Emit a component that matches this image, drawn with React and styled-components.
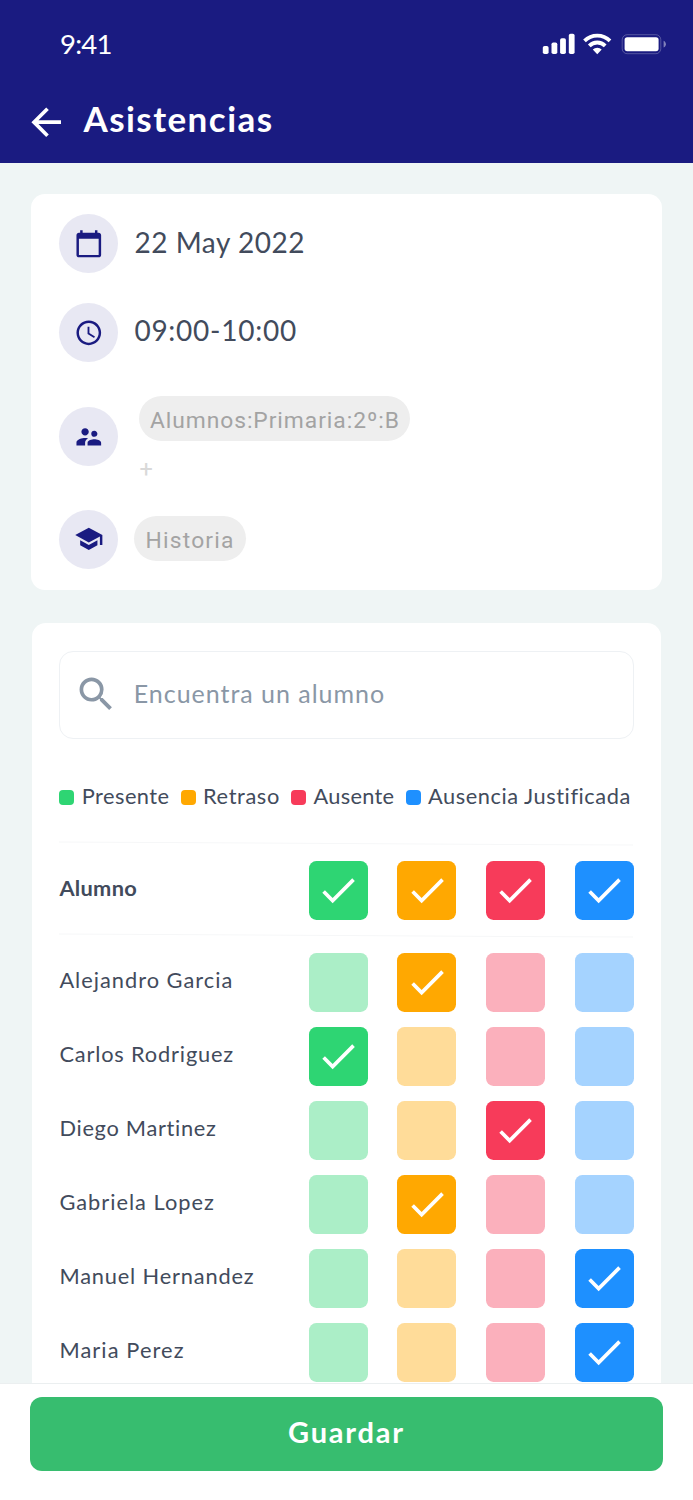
import { createGlobalStyle, styled } from "styled-components";
import {
  MdAccessTime,
  MdArrowBack,
  MdCalendarToday,
  MdCheck,
  MdSchool,
  MdSearch,
  MdSupervisorAccount,
} from "react-icons/md";

const GlobalStyle = createGlobalStyle`
  * {
    box-sizing: border-box;
  }

  body {
    margin: 0;
    font-family: Lato, "Open Sans", sans-serif;
    color: #424b5c;
  }
`;

const Screen = styled.div`
  display: flex;
  flex-direction: column;
  width: 693px;
  height: 1500px;
  overflow: hidden;
  background-color: #eff5f5;
`;

const Header = styled.header`
  height: 162.6px;
  flex-shrink: 0;
  background-color: #1a1b81;
  color: #fff;
`;

const StatusBar = styled.div`
  display: flex;
  align-items: center;
  justify-content: space-between;
  height: 88px;
  padding: 0 27px 0 60px;
`;

const Clock = styled.span`
  font-size: 27.5px;
  line-height: 32px;
  letter-spacing: -0.8px;
`;

const TitleRow = styled.div`
  display: flex;
  align-items: center;
  gap: 15px;
  height: 68px;
  padding-left: 24px;

  svg {
    flex-shrink: 0;
  }
`;

const Title = styled.h1`
  margin: 0;
  padding-bottom: 8px;
  font-size: 35px;
  line-height: 42px;
  font-weight: 700;
  letter-spacing: 1.45px;
`;

const Content = styled.main`
  flex: 1;
  min-height: 0;
  overflow: hidden;
  display: flex;
  flex-direction: column;
  gap: 33px;
  padding: 31px 31px 0;
`;

const Card = styled.section`
  flex-shrink: 0;
  background-color: #fff;
  border-radius: 14px;
`;

const InfoCard = styled(Card)`
  height: 396px;
  padding: 20.8px 28.4px;
`;

const ListCard = styled(Card)`
  margin: 0 1px;
  padding: 28px 27.4px;
`;

const InfoRow = styled.div`
  display: flex;
  align-items: center;
  gap: 16px;
  height: 59px;
  margin-bottom: ${(props) => props.$space || 0}px;
`;

const IconCircle = styled.div`
  display: flex;
  align-items: center;
  justify-content: center;
  width: 59px;
  height: 59px;
  flex-shrink: 0;
  border-radius: 50%;
  background-color: #e8e8f3;
  color: #1a1b81;
`;

const InfoText = styled.span`
  padding-bottom: 4px;
  font-size: 28px;
  line-height: 34px;
  letter-spacing: ${(props) => props.$tracking}px;
`;

const ChipColumn = styled.div`
  display: flex;
  flex-direction: column;
  gap: 12px;
  padding: 7px 0 0 5px;
`;

const Chip = styled.span`
  display: flex;
  align-items: center;
  justify-content: center;
  width: ${(props) => props.$width}px;
  height: 45px;
  margin-bottom: ${(props) => props.$lift || 0}px;
  padding-top: 5px;
  border-radius: 23px;
  background-color: #eee;
  color: #a3a3a3;
  font-family: Roboto, sans-serif;
  font-size: 22.8px;
  letter-spacing: ${(props) => props.$tracking}px;
  white-space: nowrap;
`;

const AddButton = styled.button`
  align-self: flex-start;
  padding: 0;
  border: 0;
  background: none;
  color: #d9d9d9;
  font-family: Roboto, sans-serif;
  font-size: 23.5px;
  line-height: 32px;
`;

const SearchBox = styled.div`
  display: flex;
  align-items: center;
  gap: 15px;
  height: 88px;
  padding-left: 14px;
  border: 1px solid #eef1f4;
  border-radius: 14px;
  color: #8a97a6;
  font-size: 25px;
  letter-spacing: 0.97px;
`;

const SearchText = styled.span`
  padding-bottom: 4px;
`;

const Legend = styled.div`
  display: flex;
  align-items: center;
  gap: 11.2px;
  height: 28px;
  margin-top: 44px;
  font-size: 21.8px;
`;

const LegendItem = styled.span`
  display: flex;
  align-items: center;
  gap: 7.4px;
  line-height: 28px;
  letter-spacing: ${(props) => props.$tracking}px;
  white-space: nowrap;
`;

const LegendLabel = styled.span`
  padding-bottom: 2px;
`;

const Swatch = styled.span`
  width: 15px;
  height: 15px;
  margin-top: 2px;
  border-radius: 4px;
  background-color: ${(props) => props.$color};
`;

const Divider = styled.div`
  height: 1px;
  margin-top: ${(props) => props.$top}px;
  background-color: #f6f7f8;
  transform: rotate(0.32deg);
`;

const Row = styled.div`
  display: grid;
  grid-template-columns: 1fr repeat(4, 59px);
  column-gap: 29.7px;
  align-items: center;
  height: 59px;
  margin-top: ${(props) => props.$top}px;
`;

const Name = styled.span`
  padding-bottom: 4px;
  font-size: 21.8px;
  line-height: 28px;
  font-weight: ${(props) => (props.$bold ? 700 : 400)};
  letter-spacing: ${(props) => props.$tracking}px;
  white-space: nowrap;
`;

const Box = styled.div`
  display: flex;
  align-items: center;
  justify-content: center;
  height: 59px;
  border-radius: 7.4px;
  color: #fff;
  background-color: ${(props) => props.$color};
`;

const Footer = styled.footer`
  height: 117px;
  flex-shrink: 0;
  padding: 13.4px 30px 0;
  border-top: 1px solid #ebeff0;
  background-color: #fff;
`;

const SaveButton = styled.button`
  display: block;
  width: 100%;
  height: 73.8px;
  padding: 0 0 6px;
  border: 0;
  border-radius: 12px;
  background-color: #37bd6f;
  color: #fff;
  font-family: inherit;
  font-size: 29px;
  font-weight: 700;
  letter-spacing: 1.8px;
`;

const statuses = [
  { label: "Presente", color: "#2ed573", light: "#abeec7", tracking: 0.45 },
  { label: "Retraso", color: "#ffa801", light: "#ffdc99", tracking: 0.6 },
  { label: "Ausente", color: "#f73b5a", light: "#fbb0bc", tracking: 0.3 },
  { label: "Ausencia Justificada", color: "#1e90ff", light: "#a5d3ff", tracking: 0.55 },
];

const students = [
  { name: "Alejandro Garcia", status: 1, tracking: 1 },
  { name: "Carlos Rodriguez", status: 0, tracking: 0.83 },
  { name: "Diego Martinez", status: 2, tracking: 0.7 },
  { name: "Gabriela Lopez", status: 1, tracking: 1 },
  { name: "Manuel Hernandez", status: 3, tracking: 0.83 },
  { name: "Maria Perez", status: 3, tracking: 1.1 },
];

const StatusIcons = () => (
  <svg width="124" height="22" viewBox="0 0 124 22" fill="#fff">
    <rect x="0.8" y="13" width="5.8" height="8" rx="1.8" />
    <rect x="9.5" y="9.5" width="5.8" height="11.5" rx="1.8" />
    <rect x="18.1" y="5.2" width="5.8" height="15.8" rx="1.8" />
    <rect x="26.8" y="0.7" width="5.8" height="20.3" rx="1.8" />
    <g fill="none" stroke="#fff" strokeWidth="3.8">
      <path d="M42.5 7.8a18.2 18.2 0 0 1 25.5 0" />
      <path d="M47.3 12.8a11.2 11.2 0 0 1 15.9 0" />
    </g>
    <path d="M50.8 16.6a6.3 6.3 0 0 1 8.9 0l-4.45 4.6z" />
    <rect x="80.2" y="1.7" width="38.6" height="19" rx="5" fill="none" stroke="#fff" strokeOpacity="0.25" />
    <rect x="82.6" y="4.2" width="34" height="14" rx="2.6" />
    <path d="M121.6 7.8c1.4.6 2.3 2 2.3 3.4s-.9 2.8-2.3 3.4z" opacity="0.45" />
  </svg>
);

const App = () => {
  return (
    <Screen>
      <GlobalStyle />
      <Header>
        <StatusBar>
          <Clock>9:41</Clock>
          <StatusIcons />
        </StatusBar>
        <TitleRow>
          <MdArrowBack size={44.4} />
          <Title>Asistencias</Title>
        </TitleRow>
      </Header>
      <Content>
        <InfoCard>
          <InfoRow $space={29.6}>
            <IconCircle>
              <MdCalendarToday size={29.6} />
            </IconCircle>
            <InfoText $tracking={0.55}>22 May 2022</InfoText>
          </InfoRow>
          <InfoRow $space={45.4}>
            <IconCircle>
              <MdAccessTime size={29.6} />
            </IconCircle>
            <InfoText $tracking={0.75}>09:00-10:00</InfoText>
          </InfoRow>
          <InfoRow $space={43.4}>
            <IconCircle>
              <MdSupervisorAccount size={29.6} />
            </IconCircle>
            <ChipColumn>
              <Chip $width={271} $tracking={0.95}>
                Alumnos:Primaria:2º:B
              </Chip>
              <AddButton>+</AddButton>
            </ChipColumn>
          </InfoRow>
          <InfoRow>
            <IconCircle>
              <MdSchool size={29.6} />
            </IconCircle>
            <Chip $width={111.4} $tracking={1.2} $lift={2}>
              Historia
            </Chip>
          </InfoRow>
        </InfoCard>
        <ListCard>
          <SearchBox>
            <MdSearch size={44.4} />
            <SearchText>Encuentra un alumno</SearchText>
          </SearchBox>
          <Legend>
            {statuses.map((status) => (
              <LegendItem key={status.label} $tracking={status.tracking}>
                <Swatch $color={status.color} />
                <LegendLabel>{status.label}</LegendLabel>
              </LegendItem>
            ))}
          </Legend>
          <Divider $top={32} />
          <Row $top={17.2}>
            <Name $bold $tracking={0.3}>
              Alumno
            </Name>
            {statuses.map((status) => (
              <Box key={status.label} $color={status.color}>
                <MdCheck size={44.4} />
              </Box>
            ))}
          </Row>
          <Divider $top={14.8} />
          {students.map((student, index) => (
            <Row key={student.name} $top={index === 0 ? 17.3 : 14.95}>
              <Name $tracking={student.tracking}>{student.name}</Name>
              {statuses.map((status, column) => (
                <Box
                  key={status.label}
                  $color={column === student.status ? status.color : status.light}
                >
                  {column === student.status && <MdCheck size={44.4} />}
                </Box>
              ))}
            </Row>
          ))}
        </ListCard>
      </Content>
      <Footer>
        <SaveButton>Guardar</SaveButton>
      </Footer>
    </Screen>
  );
};

export default App;
